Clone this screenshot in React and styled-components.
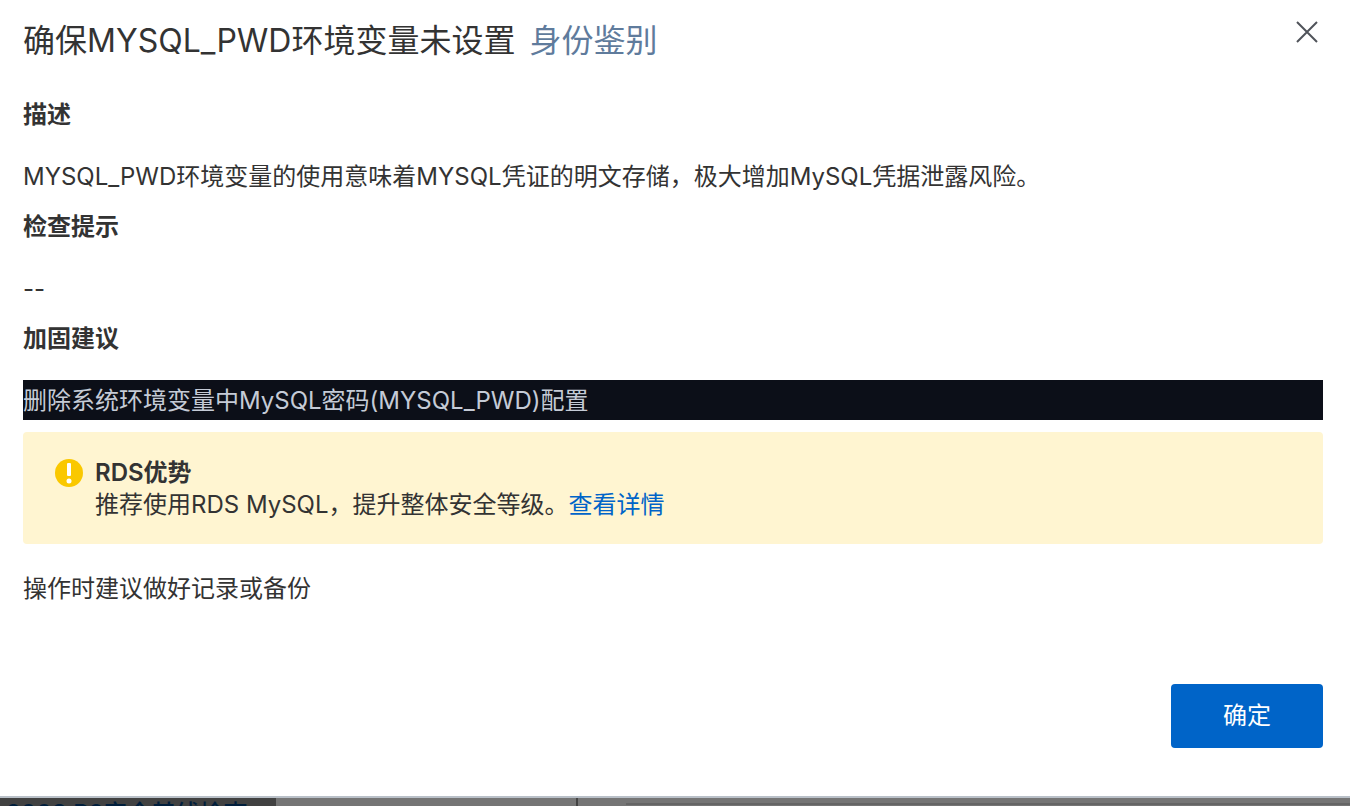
import React from "react";
import styled, { createGlobalStyle } from "styled-components";

const Global = createGlobalStyle`
  * { box-sizing: border-box; }
  body { margin: 0; background: #757575; color: #333; font: 24px/32px Inter, "Noto Sans CJK SC", sans-serif; }
`;
const Page = styled.div`
  display: flex;
  flex-direction: column;
  height: 100vh;
  overflow: hidden;
`;
const Dialog = styled.section`
  flex: none;
  background: #fff;
  border-bottom: 2px solid #b9c0c8;
  padding: 17px 27px 48px 23px;
`;
const Header = styled.header`
  display: flex;
  justify-content: space-between;
  align-items: flex-start;
`;
const Title = styled.h1`
  display: flex;
  gap: 14px;
  margin: 0;
  font-size: 32px;
  line-height: 48px;
  font-weight: 400;
`;
const Category = styled.span`
  color: #5f7b9c;
`;
const Close = styled.button`
  width: 24px;
  height: 24px;
  margin: 3px 4px 0 0;
  padding: 0;
  border: 0;
  background: none;
  color: #50535a;
  cursor: pointer;
  svg { display: block; }
`;
const Body = styled.div`
  padding-top: 31px;
`;
const Heading = styled.h2`
  margin: 0;
  font-size: 24px;
  line-height: 38px;
  font-weight: 600;
`;
const Text = styled.p`
  margin: 22px 0 10px;
  line-height: 42px;
`;
const Command = styled.pre`
  margin: 22px 0 12px;
  padding-top: 2px;
  background: #0c0f18;
  color: #c5cbd6;
  font: inherit;
  line-height: 38px;
`;
const Notice = styled.aside`
  display: flex;
  gap: 12px;
  padding: 25px 32px 23px;
  border-radius: 4px;
  background: #fff5d1;
  svg { flex: none; margin-top: 2px; }
`;
const NoticeTitle = styled.strong`
  display: block;
  font-weight: 600;
`;
const Link = styled.a`
  color: #0064c8;
  text-decoration: none;
`;
const Note = styled.p`
  margin: 29px 0 0;
`;
const Footer = styled.footer`
  display: flex;
  justify-content: flex-end;
  margin-top: 79px;
`;
const Confirm = styled.button`
  padding: 16px 52px;
  border: 0;
  border-radius: 4px;
  background: #0064c8;
  color: #fff;
  font: inherit;
  cursor: pointer;
`;
const Behind = styled.div`
  display: flex;
  flex: 1;
  min-height: 0;
  overflow: hidden;
`;
const NavItem = styled.div`
  width: 276px;
  padding-left: 6px;
  background: #414141;
  color: #001e3c;
  font-weight: 500;
  white-space: nowrap;
`;
const ListPane = styled.div`
  width: 302px;
  border-right: 2px solid #434343;
`;
const DetailPane = styled.div`
  flex: 1;
  margin: 5px 0 0 48px;
  border-top: 2px solid #656565;
`;

export default function App() {
  return (
    <Page>
      <Global />
      <Dialog role="dialog" aria-labelledby="title">
        <Header>
          <Title id="title">
            确保MYSQL_PWD环境变量未设置<Category>身份鉴别</Category>
          </Title>
          <Close type="button" aria-label="关闭">
            <svg width="24" height="24" viewBox="0 0 24 24" fill="none" stroke="currentColor" strokeWidth="2">
              <path d="M2 2 22 22M22 2 2 22" />
            </svg>
          </Close>
        </Header>
        <Body>
          <Heading>描述</Heading>
          <Text>MYSQL_PWD环境变量的使用意味着MYSQL凭证的明文存储，极大增加MySQL凭据泄露风险。</Text>
          <Heading>检查提示</Heading>
          <Text>--</Text>
          <Heading>加固建议</Heading>
          <Command>删除系统环境变量中MySQL密码(MYSQL_PWD)配置</Command>
          <Notice>
            <svg width="28" height="28" viewBox="0 0 28 28">
              <circle cx="14" cy="14" r="14" fill="#fac800" />
              <rect x="12" y="4" width="4" height="13" rx="1" fill="#fff" />
              <circle cx="14" cy="22" r="2.5" fill="#fff" />
            </svg>
            <div>
              <NoticeTitle>RDS优势</NoticeTitle>
              推荐使用RDS MySQL，提升整体安全等级。<Link href="#details">查看详情</Link>
            </div>
          </Notice>
          <Note>操作时建议做好记录或备份</Note>
        </Body>
        <Footer>
          <Confirm type="button">确定</Confirm>
        </Footer>
      </Dialog>
      <Behind>
        <NavItem>2008 R2安全基线检查</NavItem>
        <ListPane />
        <DetailPane />
      </Behind>
    </Page>
  );
}
